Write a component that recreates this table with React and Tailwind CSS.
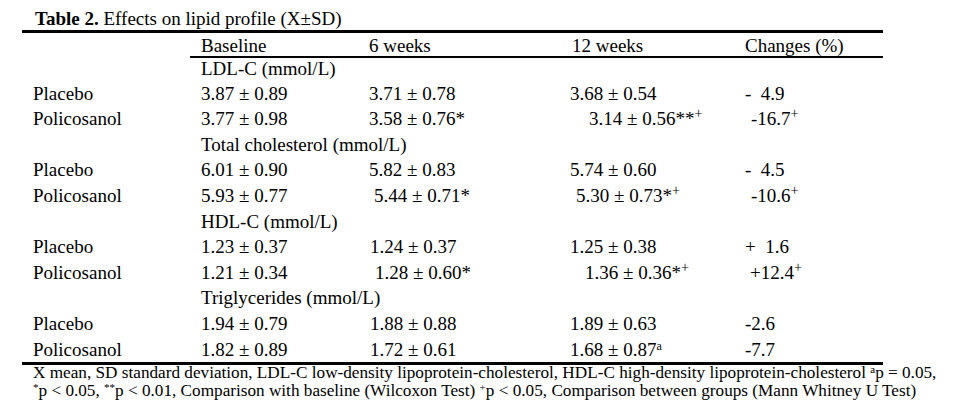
const groups = [
  {
    title: "LDL-C (mmol/L)",
    first: true,
    rows: [
      {
        label: "Placebo",
        base: "3.87 ± 0.89",
        w6: <span className="pl-[11px]">3.71 ± 0.78</span>,
        w12: <span className="pl-[9px]">3.68 ± 0.54</span>,
        change: <span className="pl-[9px]">-&nbsp;&nbsp;4.9</span>,
      },
      {
        label: "Policosanol",
        base: "3.77 ± 0.98",
        w6: <span className="pl-[11px]">3.58 ± 0.76*</span>,
        w12: (
          <span className="pl-[28px]">
            3.14 ± 0.56**<sup>+</sup>
          </span>
        ),
        change: (
          <span className="pl-[15px]">
            -16.7<sup>+</sup>
          </span>
        ),
      },
    ],
  },
  {
    title: "Total cholesterol (mmol/L)",
    rows: [
      {
        label: "Placebo",
        base: "6.01 ± 0.90",
        w6: <span className="pl-[11px]">5.82 ± 0.83</span>,
        w12: <span className="pl-[9px]">5.74 ± 0.60</span>,
        change: <span className="pl-[9px]">-&nbsp;&nbsp;4.5</span>,
      },
      {
        label: "Policosanol",
        base: "5.93 ± 0.77",
        w6: <span className="pl-[16px]">5.44 ± 0.71*</span>,
        w12: (
          <span className="pl-[15px]">
            5.30 ± 0.73*<sup>+</sup>
          </span>
        ),
        change: (
          <span className="pl-[15px]">
            -10.6<sup>+</sup>
          </span>
        ),
      },
    ],
  },
  {
    title: "HDL-C (mmol/L)",
    rows: [
      {
        label: "Placebo",
        base: "1.23 ± 0.37",
        w6: <span className="pl-[12px]">1.24 ± 0.37</span>,
        w12: <span className="pl-[9px]">1.25 ± 0.38</span>,
        change: <span className="pl-[9px]">+&nbsp;&nbsp;1.6</span>,
      },
      {
        label: "Policosanol",
        base: "1.21 ± 0.34",
        w6: <span className="pl-[17px]">1.28 ± 0.60*</span>,
        w12: (
          <span className="pl-[24px]">
            1.36 ± 0.36*<sup>+</sup>
          </span>
        ),
        change: (
          <span className="pl-[14px]">
            +12.4<sup>+</sup>
          </span>
        ),
      },
    ],
  },
  {
    title: "Triglycerides (mmol/L)",
    rows: [
      {
        label: "Placebo",
        base: "1.94 ± 0.79",
        w6: <span className="pl-[12px]">1.88 ± 0.88</span>,
        w12: <span className="pl-[9px]">1.89 ± 0.63</span>,
        change: <span className="pl-[9px]">-2.6</span>,
      },
      {
        label: "Policosanol",
        base: "1.82 ± 0.89",
        w6: <span className="pl-[12px]">1.72 ± 0.61</span>,
        w12: (
          <span className="pl-[9px]">
            1.68 ± 0.87<sup className="text-[12px] -top-[6px]">a</sup>
          </span>
        ),
        change: <span className="pl-[9px]">-7.7</span>,
      },
    ],
  },
];

const cols = "grid grid-cols-[168px_168px_203px_175px_147px] items-end";
const noteSup = "text-[11px] -top-[5px]";

function App() {
  return (
    <div className="w-[954px] h-[417px] overflow-hidden bg-white text-black font-['Liberation_Serif',serif] text-[19px] whitespace-nowrap">
      <div className="pl-[35px] pt-2 leading-[22px]">
        <span className="font-bold">Table 2.</span> Effects on lipid profile
        (X±SD)
      </div>

      <div className="ml-[22px] w-[861px] border-t-[3px] border-b-[3px] border-black pb-[2px]">
        <div className={cols + " h-[25px] leading-[21px]"}>
          <div className="h-full" />
          <div className="col-span-4 h-full border-b-2 border-black flex items-end">
            <div className="w-[168px] pl-[11px]">Baseline</div>
            <div className="w-[203px] pl-[11px]">6 weeks</div>
            <div className="w-[175px] pl-[11px]">12 weeks</div>
            <div className="w-[147px] pl-[9px]">Changes (%)</div>
          </div>
        </div>

        {groups.map((group) => (
          <div key={group.title}>
            <div
              className={
                cols +
                " leading-[21px] " +
                (group.first ? "h-[20px]" : "h-[25.6px]")
              }
            >
              <div />
              <div className="col-span-4 pl-[11px]">{group.title}</div>
            </div>
            {group.rows.map((row) => (
              <div key={row.label} className={cols + " h-[25.6px] leading-[21px]"}>
                <div className="pl-[11px]">{row.label}</div>
                <div className="pl-[11px]">{row.base}</div>
                <div>{row.w6}</div>
                <div>{row.w12}</div>
                <div>{row.change}</div>
              </div>
            ))}
          </div>
        ))}
      </div>

      <div className="pl-[33px] -mt-[1px] text-[17.2px] leading-[18px]">
        X mean, SD standard deviation, LDL-C low-density lipoprotein-cholesterol,
        HDL-C high-density lipoprotein-cholesterol <sup className={noteSup}>a</sup>p
        = 0.05,
        <br />
        <sup className={noteSup}>*</sup>p &lt; 0.05,{" "}
        <sup className={noteSup}>**</sup>p &lt; 0.01, Comparison with baseline
        (Wilcoxon Test) <sup className={noteSup}>+</sup>p &lt; 0.05, Comparison
        between groups (Mann Whitney U Test)
      </div>
    </div>
  );
}

export default App;
